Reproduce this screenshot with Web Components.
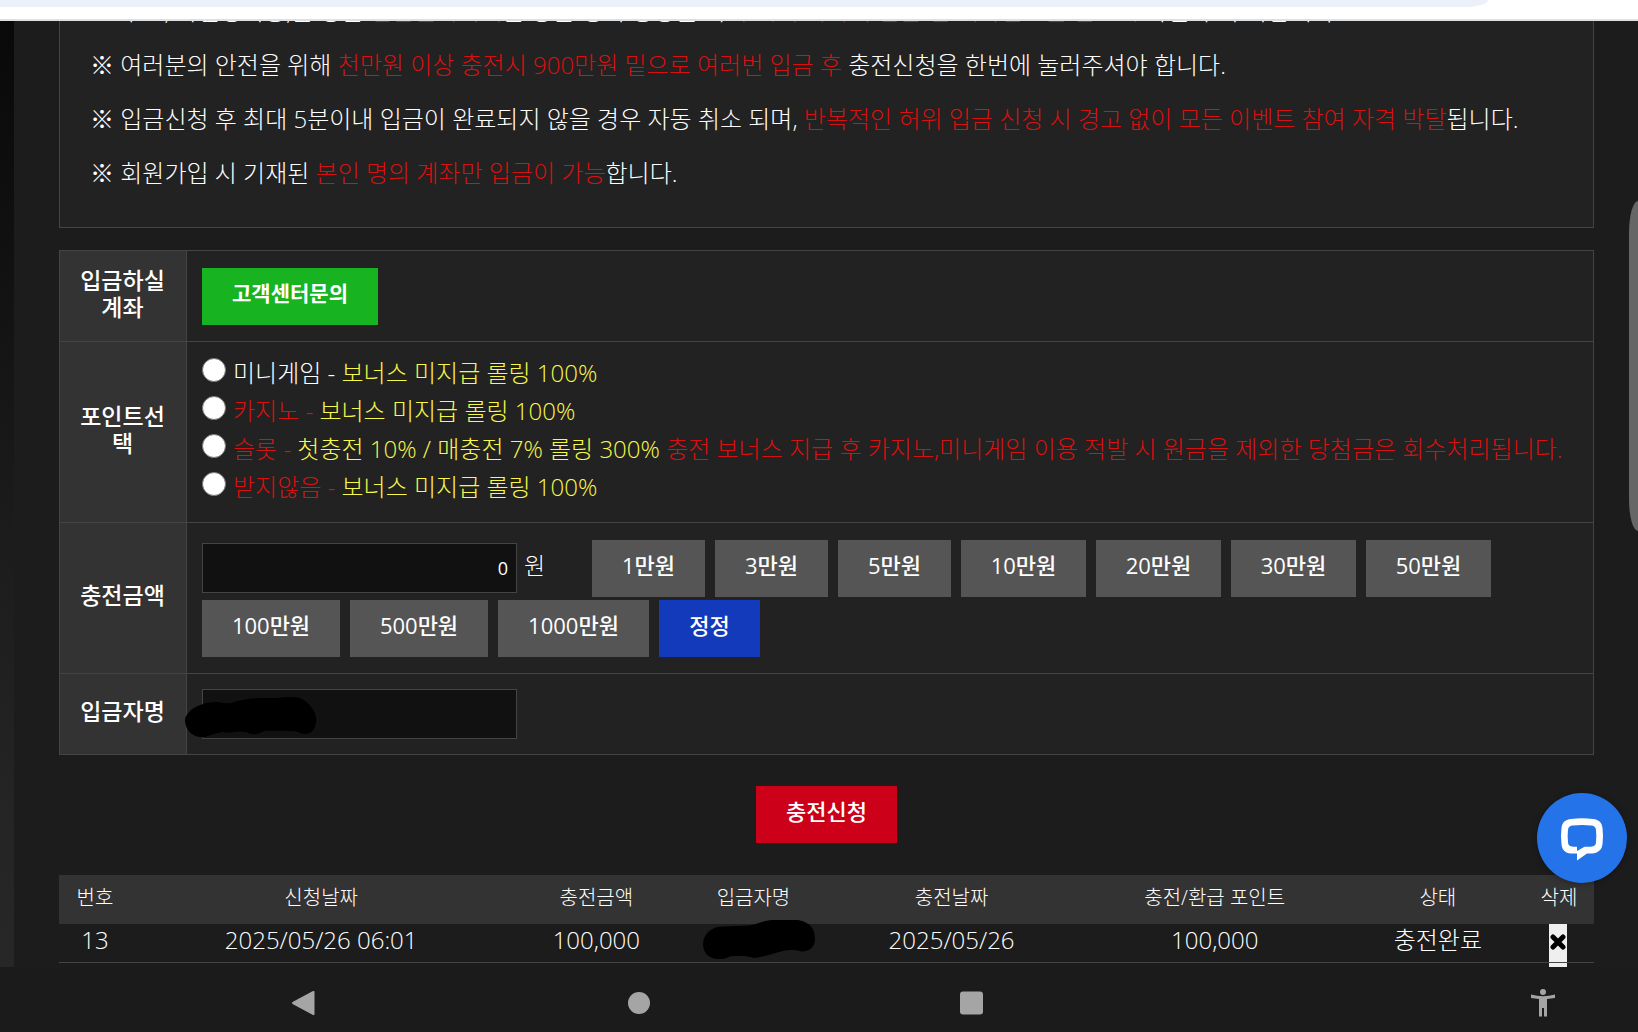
<!DOCTYPE html>
<html lang="ko">
<head>
<meta charset="utf-8">
<title>충전신청</title>
<style>
html, body { height: 100%; margin: 0; }
body {
  background: #1b1b1b;
  color: #fff;
  font: 300 24px/1.2 "Open Sans", "Noto Sans CJK KR", sans-serif;
  overflow: hidden;
}
</style>
</head>
<body>
<app-shell></app-shell>
<script>
const define = (name, html, setup) => customElements.define(name, class extends HTMLElement {
  constructor() {
    super();
    this.attachShadow({ mode: 'open' }).innerHTML = html;
  }
  connectedCallback() { if (setup) setup(this, this.shadowRoot); }
});

define('browser-bar', `
<style>
:host { display: block; flex: none; height: 19px; background: #fff; border-bottom: 2px solid #dce1e6; }
.address { height: 7px; margin-right: 150px; background: #ecf0f9; border-bottom-right-radius: 24px 7px; }
</style>
<div class="address"></div>`);

define('notice-box', `
<style>
:host { display: block; background: #222; border: 1px solid #444; border-top: 0; padding: 0 31px 27px 30px; margin-top: -37px; }
p { margin: 0; line-height: 54px; white-space: nowrap; }
em { font-style: normal; color: #d81110; }
</style>
<p>※ 수표, 타인명의등,은 상품 <em>입금불가하니</em>은 상품 명의 통장을 꼭 <em>주시기 바라며 입금 전 계좌번호를 반드시</em> 확인 부탁 바랍니다.</p>
<p>※ 여러분의 안전을 위해 <em>천만원 이상 충전시 900만원 밑으로 여러번 입금 후</em> 충전신청을 한번에 눌러주셔야 합니다.</p>
<p>※ 입금신청 후 최대 5분이내 입금이 완료되지 않을 경우 자동 취소 되며, <em>반복적인 허위 입금 신청 시 경고 없이 모든 이벤트 참여 자격 박탈</em>됩니다.</p>
<p>※ 회원가입 시 기재된 <em>본인 명의 계좌만 입금이 가능</em>합니다.</p>`);

define('action-button', `
<style>
:host { display: block; --w: 113px; }
:host([size="xs"]) { --w: 101px; }
:host([size="m"]) { --w: 125px; }
:host([size="l"]) { --w: 138px; }
:host([size="submit"]) { --w: 141px; }
:host([size="xl"]) { --w: 151px; }
:host([size="xxl"]) { --w: 176px; }
button {
  display: block; box-sizing: border-box; width: var(--w); height: 57px;
  padding: 0 0 6px; border: 0; background: #555; color: #fff;
  font: inherit; font-size: 22px; font-weight: 500; white-space: nowrap; cursor: pointer;
}
:host([tone="green"]) button { background: #17b321; font-size: 21px; font-weight: 700; }
:host([tone="blue"]) button { background: #133abb; }
:host([tone="red"]) button { background: #cd0019; }
</style>
<button type="button"><slot></slot></button>`);

define('form-row', `
<style>
:host { display: flex; border-top: 1px solid #444; }
.head {
  flex: none; box-sizing: border-box; width: 127px; padding: 0 20px 5px 19px; background: #333;
  border-right: 1px solid #444; display: flex; align-items: center; justify-content: center;
  text-align: center; font-size: 23px; font-weight: 500; line-height: 27px;
}
.body { flex: 1; min-width: 0; padding: 17px 15px 16px; }
:host([pad="list"]) .body { padding-top: 12px; }
:host([pad="field"]) .body { padding: 15px; }
</style>
<div class="head"><slot name="label"></slot></div>
<div class="body"><slot></slot></div>`);

define('ink-mark', `
<style>
:host { display: block; position: absolute; pointer-events: none; }
svg { display: block; width: 100%; height: 100%; }
</style>
<svg viewBox="0 0 132 42" preserveAspectRatio="none" aria-hidden="true"><path></path></svg>`,
(el, root) => {
  root.querySelector('path').setAttribute('d', el.getAttribute('shape') === 'b'
    ? 'M0 27C0 15 10 7 24 7L54 6C66 4 74-1 90 0L112 0C126 2 132 10 132 20C132 30 125 34 116 34C108 32 104 32 96 33C84 35 73 40 60 41C52 38 43 39 32 39C26 42 21 43 15 42C5 40 1 35 0 27Z'
    : 'M0 24C0 14 15 5 31 5C37 5 38 7 46 6C58 2 69 1 84 1C98 1 104-1 111 0C121 2 127 10 130 16C134 27 128 38 120 37C115 37 114 34 108 34L79 34C73 37 68 39 61 35C50 33 46 37 38 35C28 36 21 41 15 40C6 39 1 33 0 24Z');
});

define('deposit-form', `
<style>
:host { display: block; margin-top: 22px; background: #222; border: 1px solid #444; border-top: 0; }
.options { display: flex; flex-direction: column; }
.option { display: flex; align-items: center; gap: 7px; height: 38px; white-space: nowrap; }
.red { color: #d81110; }
.yellow { color: #f8f84a; }
input { font: inherit; color: #fff; margin: 0; box-sizing: border-box; }
input[type=radio] {
  appearance: none; flex: none; width: 24px; height: 24px; margin-bottom: 6px;
  border: 1px solid #777; border-radius: 50%; background: #fff;
}
input[type=text] { display: block; width: 315px; height: 50px; padding: 0 8px; border: 1px solid #444; background: #111; font-size: 18px; font-weight: 400; }
#amount { text-align: right; }
.amounts { display: flex; flex-wrap: wrap; gap: 3px 10px; align-items: center; }
.money { display: flex; align-items: center; gap: 7px; width: 380px; padding-bottom: 2px; }
.unit { padding-bottom: 4px; font-size: 23px; }
.field { position: relative; }
ink-mark { left: -17px; top: 8px; width: 132px; height: 42px; }
label { cursor: pointer; }
</style>
<form-row><span slot="label">입금하실 계좌</span><action-button tone="green" size="xxl">고객센터문의</action-button></form-row>
<form-row pad="list"><span slot="label">포인트선택</span>
  <div class="options">
    <label class="option"><input type="radio" name="bonus"><span>미니게임 - <span class="yellow">보너스 미지급 롤링 100%</span></span></label>
    <label class="option"><input type="radio" name="bonus"><span class="red">카지노 - <span class="yellow">보너스 미지급 롤링 100%</span></span></label>
    <label class="option"><input type="radio" name="bonus"><span class="red">슬롯 - <span class="yellow">첫충전 10% / 매충전 7% 롤링 300%</span> 충전 보너스 지급 후 카지노,미니게임 이용 적발 시 원금을 제외한 당첨금은 회수처리됩니다.</span></label>
    <label class="option"><input type="radio" name="bonus"><span class="red">받지않음 - <span class="yellow">보너스 미지급 롤링 100%</span></span></label>
  </div>
</form-row>
<form-row><label slot="label" for="amount">충전금액</label>
  <div class="amounts">
    <div class="money"><input type="text" id="amount" value="0"><span class="unit">원</span></div>
    <action-button>1만원</action-button><action-button>3만원</action-button><action-button>5만원</action-button>
    <action-button size="m">10만원</action-button><action-button size="m">20만원</action-button><action-button size="m">30만원</action-button><action-button size="m">50만원</action-button>
    <action-button size="l">100만원</action-button><action-button size="l">500만원</action-button><action-button size="xl">1000만원</action-button><action-button size="xs" tone="blue">정정</action-button>
  </div>
</form-row>
<form-row pad="field"><label slot="label" for="depositor">입금자명</label>
  <div class="field"><input type="text" id="depositor"><ink-mark></ink-mark></div>
</form-row>`);

define('history-table', `
<style>
:host { display: block; margin-top: 32px; }
table { width: 100%; table-layout: fixed; border-collapse: collapse; text-align: center; }
th { height: 49px; padding: 0 0 4px; box-sizing: border-box; background: #333; font-size: 20px; font-weight: 300; line-height: 24px; white-space: nowrap; }
td { height: 38px; padding: 0 0 5px; box-sizing: border-box; border-bottom: 1px solid #444; line-height: 28px; white-space: nowrap; }
.cell { position: relative; }
ink-mark { left: 22px; top: -4px; width: 112px; height: 39px; }
button { position: absolute; left: 25px; top: 0; width: 18px; height: 50px; padding: 0; border: 0; background: linear-gradient(#444, #444) 0 38px / 100% 1px no-repeat #efefef; }
svg { display: block; width: 16px; height: 16px; margin: -14px auto 0; }
</style>
<table>
  <colgroup><col style="width:72px"><col style="width:380px"><col style="width:170px"><col style="width:144px"><col style="width:252px"><col style="width:274px"><col style="width:172px"><col style="width:70px"></colgroup>
  <thead><tr><th>번호</th><th>신청날짜</th><th>충전금액</th><th>입금자명</th><th>충전날짜</th><th>충전/환급 포인트</th><th>상태</th><th>삭제</th></tr></thead>
  <tbody><tr><td>13</td><td>2025/05/26 06:01</td><td>100,000</td><td class="cell"><ink-mark shape="b"></ink-mark></td><td>2025/05/26</td><td>100,000</td><td>충전완료</td>
  <td class="cell"><button type="button" aria-label="삭제"><svg viewBox="0 0 16 16"><path d="M3 3L13 13M13 3L3 13" stroke="#000" stroke-width="5" stroke-linecap="round"/></svg></button></td></tr></tbody>
</table>`);

define('chat-button', `
<style>
:host { display: block; position: absolute; right: 11px; bottom: 84px; }
button { display: block; width: 90px; height: 90px; padding: 0; border: 0; border-radius: 50%; background: #2473e8; box-shadow: 0 1px 6px #0005; cursor: pointer; }
svg { display: block; width: 90px; height: 90px; }
</style>
<button type="button" aria-label="채팅"><svg viewBox="0 0 90 90"><path fill="#fff" fill-rule="evenodd" d="M34 26Q45 24.500 56 26C62 26.500 65 30 65.500 35Q66.500 43 65.500 51C65 57 61 60 55 60.500H50L40 67.500V60.500H34C28 60 25 57 24.500 51Q23.500 43 24.500 35C25 30 28 26.500 34 26ZM36 32.500C33 32.700 31.200 34 31 37Q30.300 43 31 49C31.200 52.500 33 53.500 36 53.700H40V58L47.500 53.700H54C57 53.500 58.800 52.500 59 49Q59.700 43 59 37C58.800 34 57 32.700 54 32.500Q45 31.500 36 32.500Z"/></svg></button>`);

define('scroll-handle', `
<style>
:host { display: block; position: absolute; right: 0; top: 180px; width: 9px; height: 330px; background: #666; border-radius: 9px 0 0 9px / 32px 0 0 32px; }
</style>`);

define('nav-bar', `
<style>
:host { display: grid; grid-template-columns: 607fr 331fr 332fr 368fr; flex: none; height: 65px; background: #1b1b1b; }
button { border: 0; padding: 0; background: none; display: flex; align-items: center; height: 72px; }
svg { display: block; width: 28px; height: 32px; fill: #a5a5a5; }
.back { justify-content: center; }
.home { justify-content: flex-start; padding-left: 18px; }
.recent { justify-content: flex-start; padding-left: 19px; }
.access { justify-content: flex-end; padding-right: 81px; }
</style>
<button type="button" class="back" aria-label="뒤로"><svg viewBox="0 0 28 32"><path d="M2.500 15L23 4Q24.500 3.500 24.500 5V27Q24.500 28.500 23 28L2.500 17Q1.500 16 2.500 15Z"/></svg></button>
<button type="button" class="home" aria-label="홈"><svg viewBox="0 0 28 32"><circle cx="14" cy="16" r="11"/></svg></button>
<button type="button" class="recent" aria-label="최근 앱"><svg viewBox="0 0 28 32"><rect x="3" y="4.500" width="23" height="23" rx="3"/></svg></button>
<button type="button" class="access" aria-label="접근성"><svg viewBox="0 0 28 32"><circle cx="14" cy="5" r="3"/><path d="M2 7.500Q14 11 26 7.500V11L18 12V29.500H15V21H13V29.500H10V12L2 11Z"/></svg></button>`);

define('app-shell', `
<style>
:host { display: flex; flex-direction: column; height: 100vh; position: relative; overflow: hidden; }
.view { flex: 1; min-height: 0; overflow: hidden; position: relative; display: flex; background: #1c1c1c; }
.backdrop { flex: none; width: 14px; background: linear-gradient(#090909, #111 25%, #1c1c1c 55%, #252525 85%, #272727); }
main { flex: 1; min-width: 0; padding: 0 44px 0 45px; }
.submit { display: flex; justify-content: center; margin-top: 31px; }
</style>
<browser-bar></browser-bar>
<div class="view">
  <div class="backdrop"></div>
  <main>
    <notice-box></notice-box>
    <deposit-form></deposit-form>
    <div class="submit"><action-button tone="red" size="submit">충전신청</action-button></div>
    <history-table></history-table>
  </main>
  <scroll-handle></scroll-handle>
  <chat-button></chat-button>
</div>
<nav-bar></nav-bar>`);
</script>
</body>
</html>
